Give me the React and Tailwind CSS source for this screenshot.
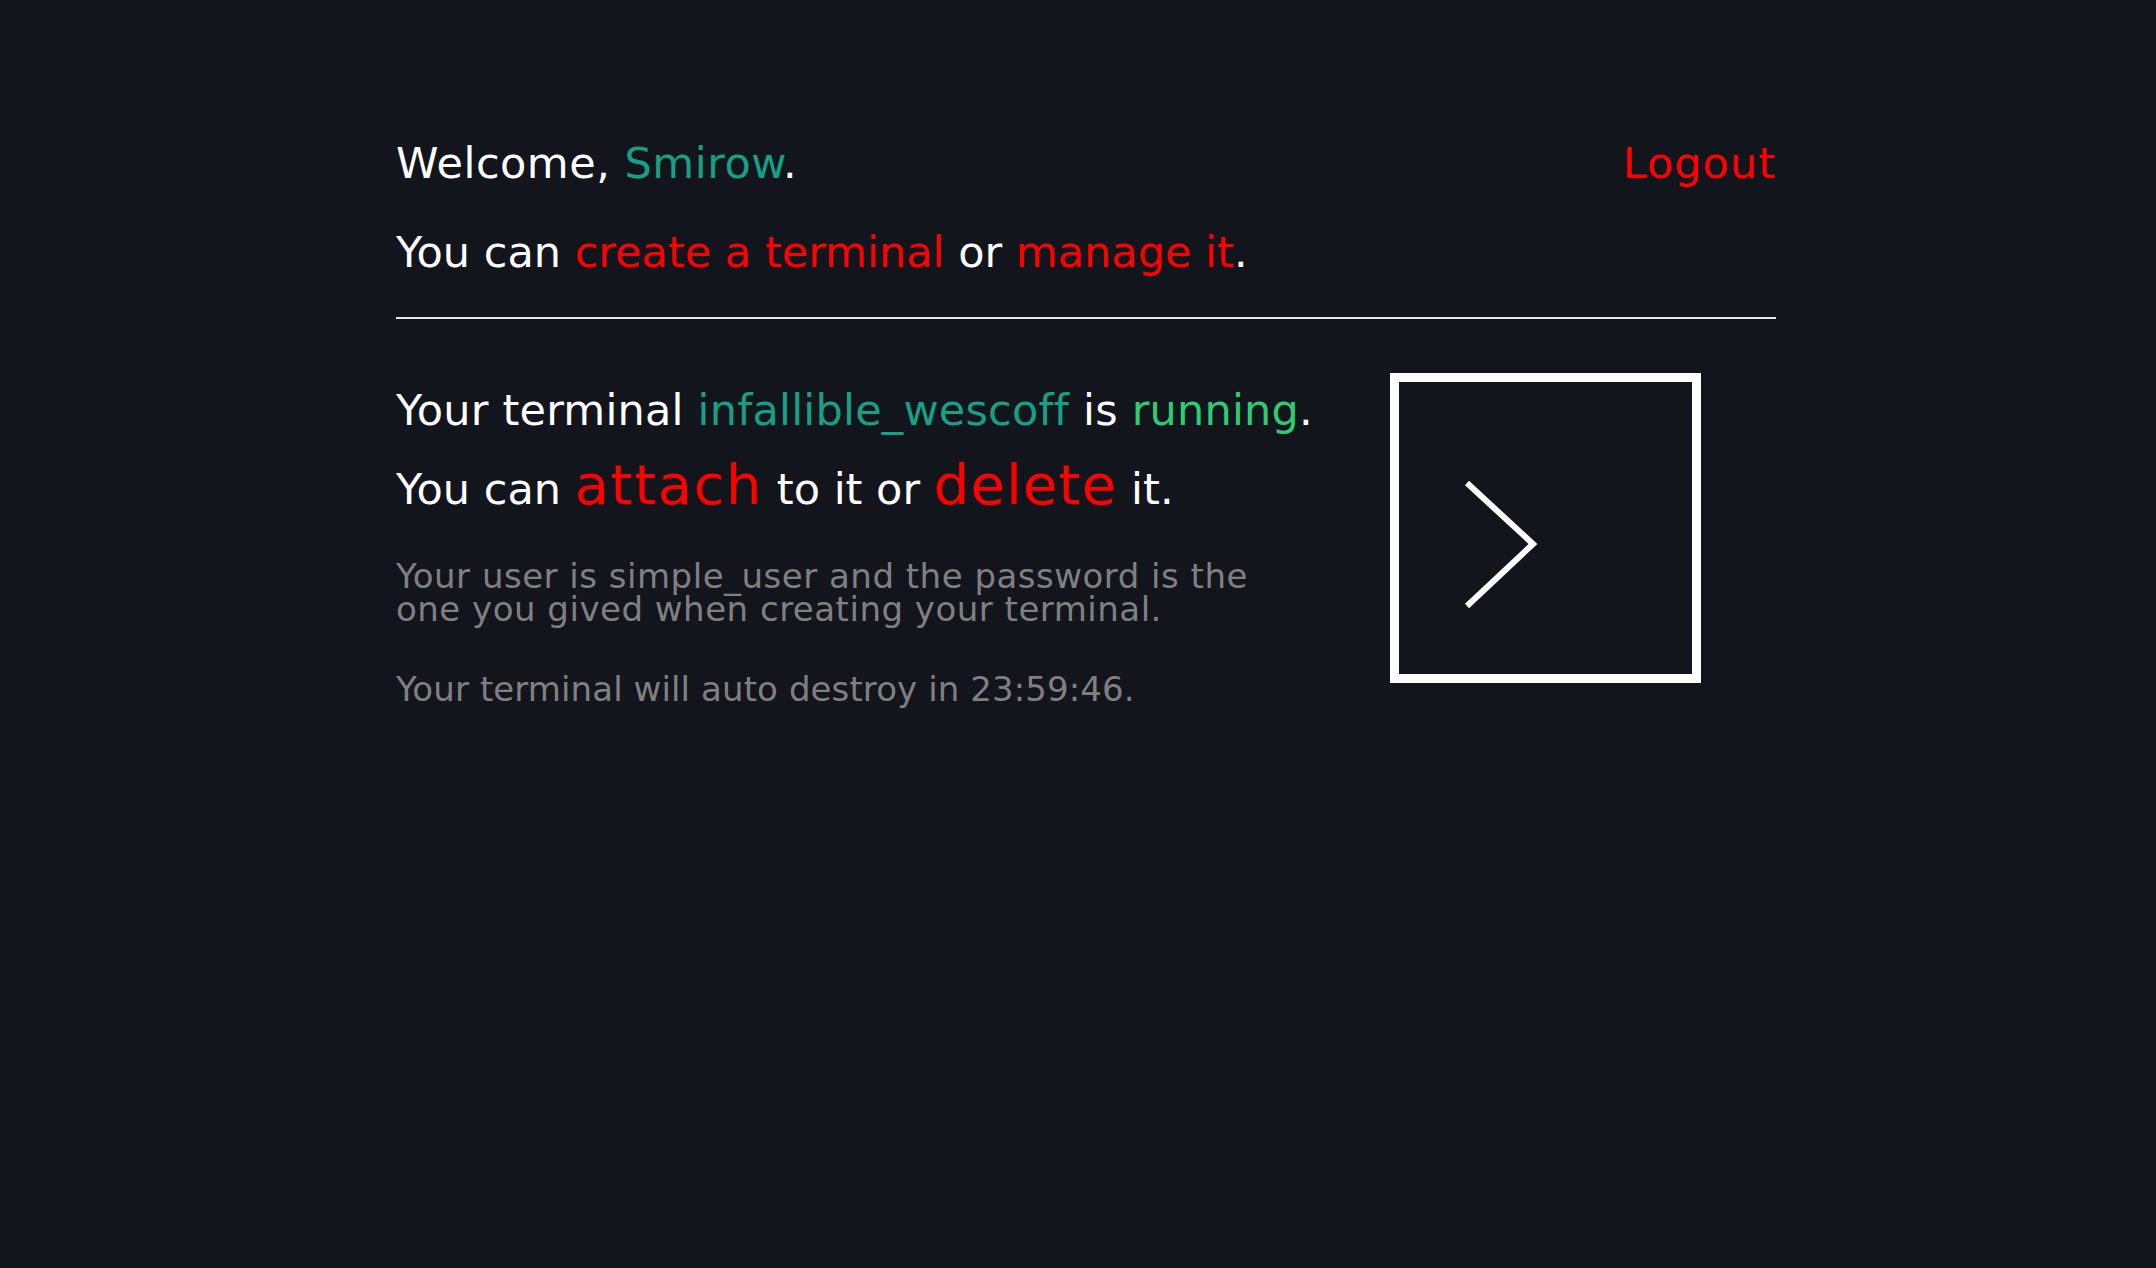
import React from 'react';

const font = { fontFamily: '"DejaVu Sans", "Liberation Sans", sans-serif' };

function TerminalIcon() {
  return (
    <div className="w-[311px] h-[310px] border-[9px] border-white shrink-0">
      <svg viewBox="0 0 293 292" className="w-full h-full">
        <polyline
          points="68,101 134,162 68,224"
          fill="none"
          stroke="white"
          strokeWidth="6"
          strokeLinecap="butt"
          strokeLinejoin="miter"
        />
      </svg>
    </div>
  );
}

export default function App() {
  return (
    <div className="min-h-screen w-full bg-[#13151d] text-white" style={font}>
      <div className="ml-[396px] w-[1380px] pt-[142px]">
        <div className="flex justify-between items-start text-[43px] leading-none tracking-[0.5px]">
          <p>
            Welcome, <span className="text-[#16a085]">Smirow</span>.
          </p>
          <button className="text-[#ff0000] leading-none tracking-[1px]">Logout</button>
        </div>
        <p className="mt-[46px] text-[43px] leading-none">
          You can <a className="text-[#ff0000]">create a terminal</a> or{' '}
          <a className="text-[#ff0000]">manage it</a>.
        </p>
        <div className="mt-[43px] h-[2px] bg-[#e8e8e8]" />

        <div className="mt-[54px] flex justify-between items-start">
          <div className="pt-[16px]">
            <p className="text-[43px] leading-none whitespace-nowrap tracking-[0.2px]">
              Your terminal <span className="text-[#16a085]">infallible_wescoff</span> is{' '}
              <span className="text-[#2ecc71]">running</span>.
            </p>
            <p className="mt-[25px] text-[43px] leading-none whitespace-nowrap">
              You can <a className="text-[#ff0000] text-[56px] leading-none tracking-[1.6px]">attach</a> to it or{' '}
              <a className="text-[#ff0000] text-[56px] leading-none tracking-[1.2px]">delete</a> it.
            </p>
            <p className="mt-[47px] text-[34px] leading-[33px] text-[#808080] whitespace-nowrap tracking-[0.5px]">
              Your user is simple_user and the password is the
              <br />
              one you gived when creating your terminal.
            </p>
            <p className="mt-[46px] text-[34px] leading-none text-[#808080] tracking-[0.1px]">
              Your terminal will auto destroy in 23:59:46.
            </p>
          </div>
          <div className="mr-[75px]">
            <TerminalIcon />
          </div>
        </div>
      </div>
    </div>
  );
}
